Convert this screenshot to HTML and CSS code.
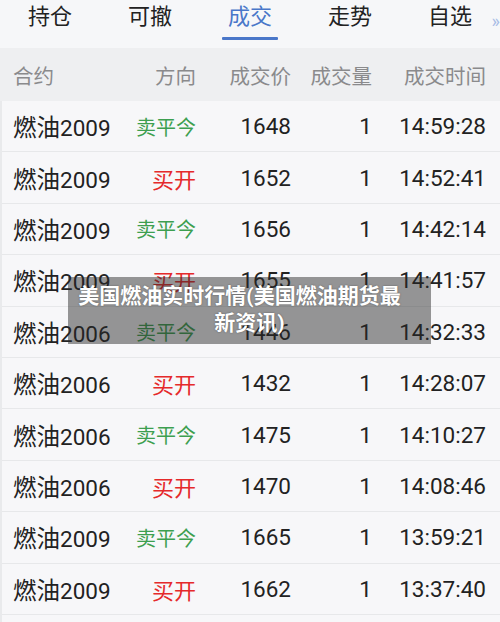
FILE: index.html
```html
<!DOCTYPE html>
<html lang="zh-CN">
<head>
<meta charset="utf-8">
<title>成交</title>
<link rel="stylesheet" href="styles.css">
</head>
<body>
<div class="page">
  <nav class="tabs">
    <div class="tab"><span class="tab-text">持仓</span></div>
    <div class="tab"><span class="tab-text">可撤</span></div>
    <div class="tab active"><span class="tab-text">成交</span><span class="bar"></span></div>
    <div class="tab"><span class="tab-text">走势</span></div>
    <div class="tab"><span class="tab-text">自选</span></div>
    <span class="more">»</span>
  </nav>
  <div class="row head">
    <span class="c-name">合约</span>
    <span class="c-dir">方向</span>
    <span class="c-num">成交价</span>
    <span class="c-num">成交量</span>
    <span class="c-num">成交时间</span>
  </div>
  <div class="list">
    <div class="row"><span class="c-name"><span class="cn">燃油</span>2009</span><span class="c-dir sell">卖平今</span><span class="c-num">1648</span><span class="c-num">1</span><span class="c-num">14:59:28</span></div>
    <div class="row"><span class="c-name"><span class="cn">燃油</span>2009</span><span class="c-dir buy">买开</span><span class="c-num">1652</span><span class="c-num">1</span><span class="c-num">14:52:41</span></div>
    <div class="row"><span class="c-name"><span class="cn">燃油</span>2009</span><span class="c-dir sell">卖平今</span><span class="c-num">1656</span><span class="c-num">1</span><span class="c-num">14:42:14</span></div>
    <div class="row"><span class="c-name"><span class="cn">燃油</span>2009</span><span class="c-dir buy">买开</span><span class="c-num">1655</span><span class="c-num">1</span><span class="c-num">14:41:57</span></div>
    <div class="row"><span class="c-name"><span class="cn">燃油</span>2006</span><span class="c-dir sell">卖平今</span><span class="c-num">1446</span><span class="c-num">1</span><span class="c-num">14:32:33</span></div>
    <div class="row"><span class="c-name"><span class="cn">燃油</span>2006</span><span class="c-dir buy">买开</span><span class="c-num">1432</span><span class="c-num">1</span><span class="c-num">14:28:07</span></div>
    <div class="row"><span class="c-name"><span class="cn">燃油</span>2006</span><span class="c-dir sell">卖平今</span><span class="c-num">1475</span><span class="c-num">1</span><span class="c-num">14:10:27</span></div>
    <div class="row"><span class="c-name"><span class="cn">燃油</span>2006</span><span class="c-dir buy">买开</span><span class="c-num">1470</span><span class="c-num">1</span><span class="c-num">14:08:46</span></div>
    <div class="row"><span class="c-name"><span class="cn">燃油</span>2009</span><span class="c-dir sell">卖平今</span><span class="c-num">1665</span><span class="c-num">1</span><span class="c-num">13:59:21</span></div>
    <div class="row"><span class="c-name"><span class="cn">燃油</span>2009</span><span class="c-dir buy">买开</span><span class="c-num">1662</span><span class="c-num">1</span><span class="c-num">13:37:40</span></div>
  </div>
  <div class="caption"><span class="cap-l1">美国燃油实时行情(美国燃油期货最</span><span class="cap-l2">新资讯)</span></div>
</div>
</body>
</html>
```
FILE: styles.css
```css
* { box-sizing: border-box; }
html, body { margin: 0; padding: 0; }
body {
  width: 500px;
  height: 622px;
  overflow: hidden;
  background: #f7f7f9;
  font-family: Roboto, "Noto Sans CJK SC", sans-serif;
  color: #222;
}
.page {
  position: relative;
  width: 500px;
  height: 622px;
  border-left: 2px solid #e9eaec;
}
.tabs {
  position: relative;
  display: grid;
  grid-template-columns: repeat(5, 100px);
  height: 48px;
  margin-left: -2px;
  background: #f6f7f9;
}
.tab {
  display: flex;
  flex-direction: column;
  align-items: center;
  padding-top: 2px;
}
.tab-text {
  font-size: 22px;
  line-height: 30px;
  color: #222;
}
.tab.active .tab-text { color: #4a77c9; }
.bar {
  display: block;
  width: 56px;
  height: 3px;
  margin-top: 5px;
  background: #4a77c9;
  border-radius: 1px;
}
.more {
  position: absolute;
  right: 0;
  top: 10px;
  font-size: 18px;
  color: #a9bde6;
}
.row {
  display: grid;
  grid-template-columns: 117px 66px 95px 81px 114px;
  align-items: center;
  height: 51.4px;
  padding-left: 11px;
  border-bottom: 1px solid #e7e8ea;
  font-size: 22.5px;
  white-space: nowrap;
}
.row.head {
  height: 53px;
  background: #eeeff1;
  border-bottom: none;
  font-size: 20.5px;
  color: #8a8a8c;
  padding-left: 13px;
  margin-left: -2px;
}
.c-name { text-align: left; }
.cn { font-size: 23.5px; }
.c-dir { text-align: right; }
.head .c-dir { font-size: 20.5px; }
.c-num { text-align: right; font-size: 22.5px; }
.head .c-num { font-size: 20.5px; }
.sell { color: #3d9f50; font-size: 20px; }
.buy { color: #e52a2b; font-size: 22px; }
.caption {
  position: absolute;
  left: 66px;
  top: 277px;
  width: 363px;
  height: 67px;
  padding: 6px 0;
  background: rgba(40, 40, 40, 0.48);
  color: #fff;
  font-weight: bold;
  font-size: 21px;
  line-height: 27px;
  text-align: center;
  text-shadow: 0 0 2px rgba(0,0,0,0.4);
}
.cap-l1 { display: block; padding-right: 20px; white-space: nowrap; }
.cap-l2 { display: block; }
```
